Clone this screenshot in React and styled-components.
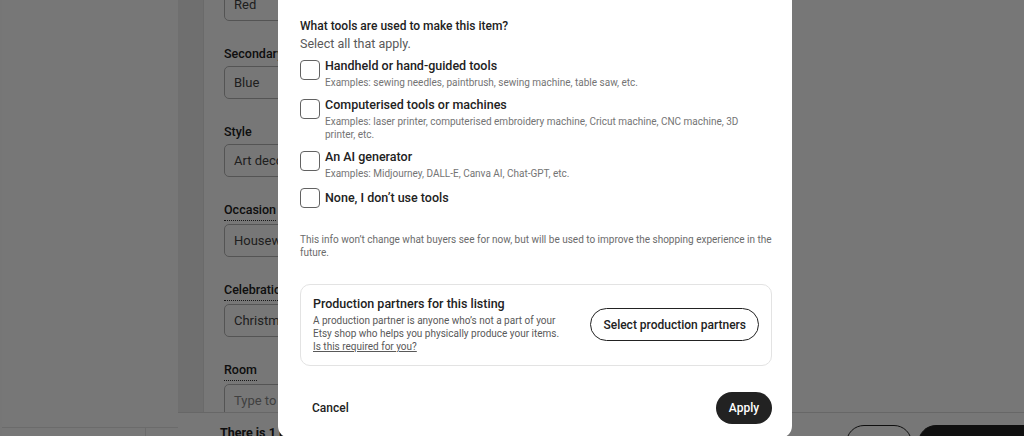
import React from 'react'
import styled, { createGlobalStyle } from 'styled-components'

const Global = createGlobalStyle`
    * { box-sizing: border-box; }
    html, body { margin: 0; padding: 0; }
    body {
        font-family: Roboto, "Noto Sans", Arial, sans-serif;
        color: #222;
        overflow: hidden;
    }
`

const Pagina = styled.div`
    display: flex;
    width: 1024px;
    height: 436px;
    overflow: hidden;
    background: #fff;
`

const Lateral = styled.aside`
    width: 178px;
    flex-shrink: 0;
    display: flex;
    flex-direction: column;
    border-left: 2px solid #fdfdfd;
    background: #fff;
`

const LateralCorpo = styled.div`
    flex: 1;
`

const LateralRodape = styled.div`
    height: 9px;
    display: flex;
    border-top: 1px solid #e6e6e6;

    span {
        width: 144px;
        border-right: 1px solid #e6e6e6;
    }
`

const Principal = styled.main`
    flex: 1;
    display: flex;
    flex-direction: column;
    min-width: 0;
`

const Conteudo = styled.div`
    flex: 1;
    display: flex;
    min-height: 0;
    overflow: hidden;
`

const Faixa = styled.div`
    width: 26px;
    flex-shrink: 0;
    background: #ededed;
    border-right: 1px solid #e4e4e4;
`

const Formulario = styled.div`
    flex: 1;
    padding-left: 20px;
    margin-top: -33px;
    display: flex;
    flex-direction: column;
    gap: 24px;
`

const Campo = styled.div`
    display: flex;
    flex-direction: column;
    align-items: flex-start;
    gap: 3px;
`

const Rotulo = styled.label`
    font-size: 12.5px;
    font-weight: 500;
    line-height: 18px;
    color: #222;
    ${p => p.$pontilhado && `
        border-bottom: 1px dotted #333;
        padding-bottom: 1px;
    `}
`

const Caixa = styled.div`
    width: 290px;
    height: 33px;
    border: 1px solid #b5b5b5;
    border-radius: 5px;
    padding: 0 9px;
    display: flex;
    align-items: center;
    font-size: 13px;
    color: ${p => (p.$vazio ? '#8a8a8a' : '#444')};
`

const BarraInferior = styled.div`
    height: 24px;
    flex-shrink: 0;
    border-top: 1px solid #dcdcdc;
    display: flex;
    justify-content: space-between;
    align-items: flex-start;
    padding-left: 42px;
    background: #fff;
`

const Aviso = styled.span`
    font-size: 12.5px;
    font-weight: 700;
    margin-top: 12px;
`

const BotoesBarra = styled.div`
    display: flex;
    gap: 6px;
    margin-top: 12px;
    margin-right: -20px;
`

const BotaoBarra = styled.span`
    display: block;
    height: 36px;
    border-radius: 18px;
    width: ${p => (p.$escuro ? '126px' : '66px')};
    background: ${p => (p.$escuro ? '#222' : 'transparent')};
    border: 1.5px solid #222;
`

const Sombra = styled.div`
    position: fixed;
    inset: 0;
    background: rgba(0, 0, 0, 0.535);
`

const Modal = styled.section`
    position: fixed;
    left: 278px;
    top: -20px;
    bottom: -2px;
    width: 514px;
    background: #fff;
    border-radius: 12px;
    padding: 37px 20px 0 22px;
    display: flex;
    flex-direction: column;
`

const Pergunta = styled.h2`
    margin: 0;
    font-size: 12px;
    font-weight: 500;
    line-height: 18px;
    color: #222;
`

const Instrucao = styled.p`
    margin: 0;
    font-size: 12.5px;
    line-height: 17px;
    color: #595959;
`

const Opcoes = styled.ul`
    list-style: none;
    margin: 6px 0 0;
    padding: 0;
    display: flex;
    flex-direction: column;
    gap: 8px;
`

const Opcao = styled.li`
    display: flex;
    align-items: ${p => (p.$unica ? 'center' : 'flex-start')};
    gap: 5px;
`

const Quadrado = styled.span`
    width: 20px;
    height: 20px;
    flex-shrink: 0;
    border: 1.5px solid #626262;
    border-radius: 4px;
    margin-top: ${p => (p.$unica ? '0' : '2px')};
`

const OpcaoTexto = styled.div`
    display: flex;
    flex-direction: column;
    gap: 2px;
`

const OpcaoTitulo = styled.span`
    font-size: 12.5px;
    font-weight: 500;
    line-height: 16px;
    color: #222;
`

const Exemplo = styled.span`
    font-size: 10px;
    line-height: 13px;
    color: #747474;
    max-width: 432px;
`

const Nota = styled.p`
    margin: 25px 0 0;
    font-size: 10px;
    line-height: 13px;
    color: #6b6b6b;
`

const Parceiros = styled.div`
    margin-top: 25px;
    border: 1px solid #e3e3e3;
    border-radius: 10px;
    padding: 11px 12px 12px 12px;
    display: flex;
    align-items: center;
    justify-content: space-between;
    gap: 20px;
`

const ParceirosTexto = styled.div`
    display: flex;
    flex-direction: column;
`

const ParceirosTitulo = styled.h3`
    margin: 0 0 2px;
    font-size: 12.5px;
    font-weight: 500;
    line-height: 16px;
    color: #222;
`

const ParceirosDescricao = styled.p`
    margin: 0;
    font-size: 10px;
    line-height: 13px;
    color: #595959;
    max-width: 252px;
`

const Link = styled.a`
    font-size: 10px;
    line-height: 13px;
    color: #595959;
    text-decoration: underline;
`

const BotaoContorno = styled.button`
    height: 33px;
    padding: 0 12px;
    border: 1.5px solid #222;
    border-radius: 17px;
    background: #fff;
    font-family: inherit;
    font-size: 12px;
    font-weight: 500;
    color: #222;
    white-space: nowrap;
`

const Rodape = styled.div`
    margin-top: 26px;
    display: flex;
    justify-content: space-between;
    align-items: center;
`

const BotaoCancelar = styled.button`
    height: 32px;
    padding: 0 12px;
    border: none;
    background: transparent;
    font-family: inherit;
    font-size: 12px;
    font-weight: 500;
    color: #222;
`

const BotaoAplicar = styled.button`
    height: 32px;
    width: 56px;
    border: none;
    border-radius: 16px;
    background: #222;
    color: #fff;
    font-family: inherit;
    font-size: 12px;
    font-weight: 500;
`

const campos = [
    { rotulo: 'Primary colour', valor: 'Red' },
    { rotulo: 'Secondary colour', valor: 'Blue' },
    { rotulo: 'Style', valor: 'Art deco' },
    { rotulo: 'Occasion', valor: 'Housewarming', pontilhado: true },
    { rotulo: 'Celebration', valor: 'Christmas', pontilhado: true },
    { rotulo: 'Room', valor: 'Type to search', pontilhado: true, vazio: true },
]

const ferramentas = [
    {
        titulo: 'Handheld or hand-guided tools',
        exemplo: 'Examples: sewing needles, paintbrush, sewing machine, table saw, etc.',
    },
    {
        titulo: 'Computerised tools or machines',
        exemplo: 'Examples: laser printer, computerised embroidery machine, Cricut machine, CNC machine, 3D printer, etc.',
    },
    {
        titulo: 'An AI generator',
        exemplo: 'Examples: Midjourney, DALL-E, Canva AI, Chat-GPT, etc.',
    },
    { titulo: 'None, I don\u2019t use tools' },
]

export default function App() {
    return (
        <>
            <Global />
            <Pagina>
                <Lateral>
                    <LateralCorpo />
                    <LateralRodape><span /></LateralRodape>
                </Lateral>
                <Principal>
                    <Conteudo>
                        <Faixa />
                        <Formulario>
                            {campos.map(c => (
                                <Campo key={c.rotulo}>
                                    <Rotulo $pontilhado={c.pontilhado}>{c.rotulo}</Rotulo>
                                    <Caixa $vazio={c.vazio}>{c.valor}</Caixa>
                                </Campo>
                            ))}
                        </Formulario>
                    </Conteudo>
                    <BarraInferior>
                        <Aviso>There is 1 unsaved change</Aviso>
                        <BotoesBarra>
                            <BotaoBarra />
                            <BotaoBarra $escuro />
                        </BotoesBarra>
                    </BarraInferior>
                </Principal>
            </Pagina>

            <Sombra />

            <Modal>
                <Pergunta>What tools are used to make this item?</Pergunta>
                <Instrucao>Select all that apply.</Instrucao>

                <Opcoes>
                    {ferramentas.map(f => (
                        <Opcao key={f.titulo} $unica={!f.exemplo}>
                            <Quadrado $unica={!f.exemplo} />
                            <OpcaoTexto>
                                <OpcaoTitulo>{f.titulo}</OpcaoTitulo>
                                {f.exemplo && <Exemplo>{f.exemplo}</Exemplo>}
                            </OpcaoTexto>
                        </Opcao>
                    ))}
                </Opcoes>

                <Nota>
                    This info won’t change what buyers see for now, but will be used to improve the shopping experience in the future.
                </Nota>

                <Parceiros>
                    <ParceirosTexto>
                        <ParceirosTitulo>Production partners for this listing</ParceirosTitulo>
                        <ParceirosDescricao>
                            A production partner is anyone who’s not a part of your Etsy shop who helps you physically produce your items.
                        </ParceirosDescricao>
                        <Link href="#">Is this required for you?</Link>
                    </ParceirosTexto>
                    <BotaoContorno>Select production partners</BotaoContorno>
                </Parceiros>

                <Rodape>
                    <BotaoCancelar>Cancel</BotaoCancelar>
                    <BotaoAplicar>Apply</BotaoAplicar>
                </Rodape>
            </Modal>
        </>
    )
}
